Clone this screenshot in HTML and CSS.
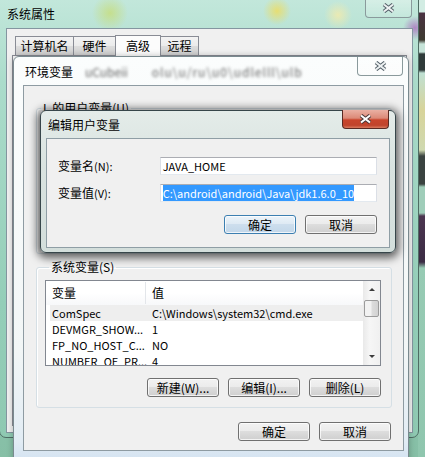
FILE: index.html
```html
<html>

<head>
    <link rel="stylesheet" href="styles.css">
</head>

<body>
    <div class="desktop">
        <div class="desk-strip"></div>

        <!-- 系统属性 -->
        <div class="window sys-win">
            <div class="title-bar">系统属性</div>
            <div class="close-btn inactive sys-close">
                <svg width="13" height="10" viewBox="0 0 13 10">
                    <path d="M2 1.5 L11 8.5 M11 1.5 L2 8.5" stroke="#56626b" stroke-width="4" fill="none" />
                    <path d="M2 1.5 L11 8.5 M11 1.5 L2 8.5" stroke="#eef2f3" stroke-width="2" fill="none" />
                </svg>
            </div>
            <div class="sys-body">
                <div class="tabs">
                    <div class="tab tab-name">计算机名</div>
                    <div class="tab tab-hw">硬件</div>
                    <div class="tab tab-adv active">高级</div>
                    <div class="tab tab-remote">远程</div>
                </div>
                <div class="tab-panel"></div>
            </div>
        </div>

        <!-- 环境变量 -->
        <div class="window env-win">
            <div class="title-bar">
                环境变量
                <span class="blur-text">uCubeii</span>
                <span class="blur-text wide">olu\u/ru\u0\udlelll\ulb</span>
            </div>
            <div class="close-btn inactive env-close">
                <svg width="13" height="10" viewBox="0 0 13 10">
                    <path d="M2 1.5 L11 8.5 M11 1.5 L2 8.5" stroke="#56626b" stroke-width="4" fill="none" />
                    <path d="M2 1.5 L11 8.5 M11 1.5 L2 8.5" stroke="#eef2f3" stroke-width="2" fill="none" />
                </svg>
            </div>
            <div class="env-body">
                <fieldset class="group user-group">
                    <legend>L 的用户变量(U)</legend>
                </fieldset>

                <fieldset class="group sys-group">
                    <legend>系统变量(S)</legend>
                    <div class="listview">
                        <div class="lv-main">
                            <div class="lv-header">
                                <div class="lv-col1">变量</div>
                                <div class="lv-col2">值</div>
                            </div>
                            <div class="lv-row selected">
                                <div class="lv-col1">ComSpec</div>
                                <div class="lv-col2">C:\Windows\system32\cmd.exe</div>
                            </div>
                            <div class="lv-row">
                                <div class="lv-col1">DEVMGR_SHOW...</div>
                                <div class="lv-col2">1</div>
                            </div>
                            <div class="lv-row">
                                <div class="lv-col1">FP_NO_HOST_C...</div>
                                <div class="lv-col2">NO</div>
                            </div>
                            <div class="lv-row">
                                <div class="lv-col1">NUMBER_OF_PR...</div>
                                <div class="lv-col2">4</div>
                            </div>
                        </div>
                        <div class="scrollbar">
                            <div class="sb-arrow up"></div>
                            <div class="sb-thumb"></div>
                            <div class="sb-track"></div>
                            <div class="sb-arrow down"></div>
                        </div>
                    </div>
                    <div class="btn-row">
                        <div class="btn">新建(W)...</div>
                        <div class="btn">编辑(I)...</div>
                        <div class="btn">删除(L)</div>
                    </div>
                </fieldset>

                <div class="footer-btns">
                    <div class="btn">确定</div>
                    <div class="btn">取消</div>
                </div>
            </div>
        </div>

        <!-- 编辑用户变量 -->
        <div class="window edit-win">
            <div class="title-bar">编辑用户变量</div>
            <div class="close-btn active-close">
                <svg width="13" height="10" viewBox="0 0 13 10">
                    <path d="M2 1.5 L11 8.5 M11 1.5 L2 8.5" stroke="#4a3a3a" stroke-width="4" fill="none" />
                    <path d="M2 1.5 L11 8.5 M11 1.5 L2 8.5" stroke="#ffffff" stroke-width="2" fill="none" />
                </svg>
            </div>
            <div class="edit-body">
                <div class="field-row">
                    <div class="field-label">变量名<span class="key">(N):</span></div>
                    <div class="textbox">JAVA_HOME</div>
                </div>
                <div class="field-row">
                    <div class="field-label">变量值<span class="key">(V):</span></div>
                    <div class="textbox"><span class="sel">C:\android\android\Java\jdk1.6.0_10</span></div>
                </div>
                <div class="edit-btns">
                    <div class="btn default">确定</div>
                    <div class="btn">取消</div>
                </div>
            </div>
        </div>
    </div>
</body>

</html>
```

FILE: styles.css
```css
body {
    margin: 0;
    font-family: "Noto Sans CJK SC", sans-serif;
    font-size: 12px;
    line-height: 14px;
    color: #000;
}

.desktop {
    position: relative;
    width: 425px;
    height: 457px;
    overflow: hidden;
    background: linear-gradient(#b6e0d1, #93c9b2 60%, #86bfa6);
}

/* bits of desktop icons peeking out on the right */
.desk-strip {
    position: absolute;
    right: 0;
    top: 0;
    width: 7px;
    height: 457px;
    background: linear-gradient(#d2ece3 0, #d2ece3 12px, #4a3242 13px, #3d3a30 40px, #c6e3d8 44px, #c6e3d8 52px, #2f3b3a 54px, #2f3b3a 70px, #bfe0d3 73px, #d8d49a 110px, #cfd9b0 150px, #3a4340 156px, #3a4340 184px, #9fcdb9 187px, #9fcdb9 213px, #4b3550 216px, #3b2c44 262px, #97cbb4 268px, #8fc6ae);
}

.window {
    position: absolute;
    box-sizing: border-box;
}

.title-bar {
    box-sizing: border-box;
    display: flex;
    align-items: center;
    white-space: nowrap;
}

.close-btn {
    position: absolute;
    box-sizing: border-box;
    display: flex;
    align-items: center;
    justify-content: center;
    border-radius: 0 0 4px 4px;
}

.close-btn.inactive {
    border: 1px solid #8a9a9c;
    border-top: none;
    background: linear-gradient(rgba(255, 255, 255, 0.35), rgba(255, 255, 255, 0.1));
}

.close-btn.active-close {
    border: 1px solid #5a2a22;
    border-top: none;
    background: linear-gradient(#eab0a3 0%, #dc8a78 45%, #c9452c 55%, #c0442c 85%, #d97a5e 100%);
}

/* ---- 系统属性 ---- */
.sys-win {
    left: -1px;
    top: -8px;
    width: 420px;
    height: 446px;
    border: 1px solid #4f6d64;
    border-radius: 7px;
    background:
        radial-gradient(circle at 110px 20px, rgba(200, 220, 110, 0.7) 0, rgba(200, 220, 110, 0) 18px),
        radial-gradient(circle at 277px 18px, rgba(240, 220, 90, 0.8) 0, rgba(240, 220, 90, 0) 14px),
        radial-gradient(circle at 338px 22px, rgba(245, 235, 170, 0.8) 0, rgba(245, 235, 170, 0) 14px),
        radial-gradient(circle at 415px 35px, rgba(170, 110, 190, 0.8) 0, rgba(170, 110, 190, 0) 12px),
        linear-gradient(#c4e8dc, #abdccb 20%, #94ceb8 70%, #8fc9b2);
}

.sys-win .title-bar {
    height: 35px;
    padding: 7px 0 0 7px;
}

.sys-close {
    left: 365px;
    top: 5px;
    width: 47px;
    height: 20px;
}

.sys-body {
    box-sizing: border-box;
    margin-left: 6px;
    width: 407px;
    height: 405px;
    border: 1px solid #8496a0;
    background: #f0f0f0;
    display: flex;
    flex-direction: column;
}

.tabs {
    display: flex;
    align-items: flex-end;
    padding: 6px 0 0 8px;
}

.tab {
    box-sizing: border-box;
    height: 19px;
    border: 1px solid #898c95;
    border-bottom: none;
    margin-right: -1px;
    background: linear-gradient(#f3f3f3, #ebebeb 50%, #dddddd 50%, #cfcfcf);
    text-align: center;
    line-height: 18px;
}

.tab.active {
    height: 21px;
    margin-bottom: -1px;
    position: relative;
    background: #fcfcfc;
    line-height: 20px;
}

.tab-name { width: 59px; }
.tab-hw { width: 43px; }
.tab-adv { width: 46px; }
.tab-remote { width: 39px; }

.tab-panel {
    flex: 1;
    margin: 0 5px 6px;
    border: 1px solid #898c95;
    background: #fcfcfc;
}

/* ---- 环境变量 ---- */
.env-win {
    left: 13px;
    top: 56px;
    width: 396px;
    height: 420px;
    border: 1px solid #7a8a8f;
    border-radius: 6px 6px 0 0;
    background: linear-gradient(#fbfdfd, #f2f6f6 70%, #e2ecf4 92%, #c8dcef);
    box-shadow: 0 0 6px rgba(0, 0, 0, 0.25);
}

.env-win .title-bar {
    height: 28px;
    padding: 2px 0 0 11px;
}

.blur-text {
    margin-left: 12px;
    color: #666;
    filter: blur(1.4px);
}

.blur-text.wide {
    margin-left: 24px;
    letter-spacing: 1px;
}

.env-close {
    left: 343px;
    top: 0;
    width: 46px;
    height: 19px;
}

.env-body {
    box-sizing: border-box;
    margin-left: 9px;
    width: 381px;
    height: 366px;
    border: 1px solid #8e9ba2;
    background: #f0f0f0;
    display: flex;
    flex-direction: column;
}

.group {
    box-sizing: border-box;
    min-width: 0;
    border: 1px solid #d5dfe5;
    border-radius: 3px;
    box-shadow: inset 1px 1px 0 #fff;
}

.group legend {
    padding: 0 2px;
    margin-left: 4px;
    line-height: 14px;
}

.user-group {
    margin: 15px 11px 0 12px;
    padding: 0;
    height: 153px;
}

.sys-group {
    margin: 6px 11px 0 12px;
    padding: 6px 0 10px 8px;
}

.listview {
    box-sizing: border-box;
    width: 336px;
    height: 86px;
    border: 1px solid #828790;
    background: #fff;
    display: flex;
}

.lv-main {
    flex: 1;
    overflow: hidden;
}

.lv-header {
    display: flex;
    height: 24px;
    align-items: center;
    background: linear-gradient(#ffffff, #ffffff 50%, #f7f8fa);
}

.lv-header .lv-col1 {
    box-sizing: border-box;
    width: 100px;
    padding-left: 6px;
    border-right: 1px solid #e3e6ea;
    line-height: 22px;
}

.lv-header .lv-col2 {
    padding-left: 6px;
}

.lv-row {
    display: flex;
    height: 16px;
    margin-left: 4px;
    font-size: 11px;
    line-height: 16px;
}

.lv-row.selected {
    background: #eeeeee;
}

.lv-row .lv-col1 {
    box-sizing: border-box;
    width: 96px;
    padding-left: 2px;
    white-space: nowrap;
}

.lv-row .lv-col2 {
    padding-left: 6px;
    white-space: nowrap;
}

.scrollbar {
    width: 17px;
    display: flex;
    flex-direction: column;
    background: linear-gradient(90deg, #e9e9e9, #f6f6f6 40%, #f0f0f0);
}

.sb-arrow {
    height: 17px;
    display: flex;
    align-items: center;
    justify-content: center;
}

.sb-arrow::after {
    content: " ";
    width: 0;
    height: 0;
    border-left: 3px solid transparent;
    border-right: 3px solid transparent;
}

.sb-arrow.up::after {
    border-bottom: 3px solid #3c3c3c;
}

.sb-arrow.down::after {
    border-top: 3px solid #3c3c3c;
}

.sb-thumb {
    box-sizing: border-box;
    height: 17px;
    margin: 2px 1px 0;
    border: 1px solid #9b9b9b;
    border-radius: 2px;
    background: linear-gradient(90deg, #f2f2f2, #f2f2f2 45%, #dcdcdc 55%, #d2d2d2);
}

.sb-track {
    flex: 1;
}

.btn-row {
    display: flex;
    justify-content: flex-end;
    gap: 9px;
    margin-top: 12px;
    padding-right: 10px;
}

.btn {
    box-sizing: border-box;
    width: 72px;
    height: 19px;
    border: 1px solid #707070;
    border-radius: 3px;
    background: linear-gradient(#f2f2f2, #ebebeb 50%, #dddddd 50%, #cfcfcf);
    box-shadow: inset 0 0 0 1px rgba(255, 255, 255, 0.75);
    text-align: center;
    line-height: 17px;
}

.btn.default {
    border-color: #3c7fb1;
    background: linear-gradient(#ecf4fa, #dde9f3 50%, #cddeed 50%, #c2d7e9);
}

.footer-btns {
    display: flex;
    justify-content: flex-end;
    gap: 9px;
    margin: 14px 12px 0 0;
}

/* ---- 编辑用户变量 ---- */
.edit-win {
    left: 40px;
    top: 110px;
    width: 356px;
    height: 143px;
    border: 1px solid #37464a;
    border-radius: 6px;
    background: linear-gradient(#e4ece9, #d9e3e0 40%, #d3dedb);
    box-shadow: 0 2px 9px 3px rgba(0, 0, 0, 0.6);
}

.edit-win .title-bar {
    height: 27px;
    padding-left: 7px;
}

.active-close {
    left: 301px;
    top: -1px;
    width: 47px;
    height: 19px;
}

.edit-body {
    box-sizing: border-box;
    margin-left: 5px;
    width: 344px;
    height: 110px;
    border: 1px solid #8f9ea5;
    background: #f0f0f0;
    padding: 18px 12px 0 11px;
}

.field-row {
    display: flex;
    align-items: center;
    height: 18px;
    margin-bottom: 9px;
}

.field-label {
    width: 102px;
}

.key {
    font-size: 11px;
}

.textbox {
    box-sizing: border-box;
    width: 218px;
    height: 18px;
    border: 1px solid #dbdfe6;
    border-top-color: #abadb3;
    border-bottom-color: #e3e9ef;
    background: #fff;
    padding-left: 2px;
    font-size: 11px;
    line-height: 16px;
    white-space: nowrap;
}

.sel {
    background: #3399ff;
    color: #fff;
}

.edit-btns {
    display: flex;
    justify-content: flex-end;
    gap: 9px;
    margin-top: 13px;
}
```
